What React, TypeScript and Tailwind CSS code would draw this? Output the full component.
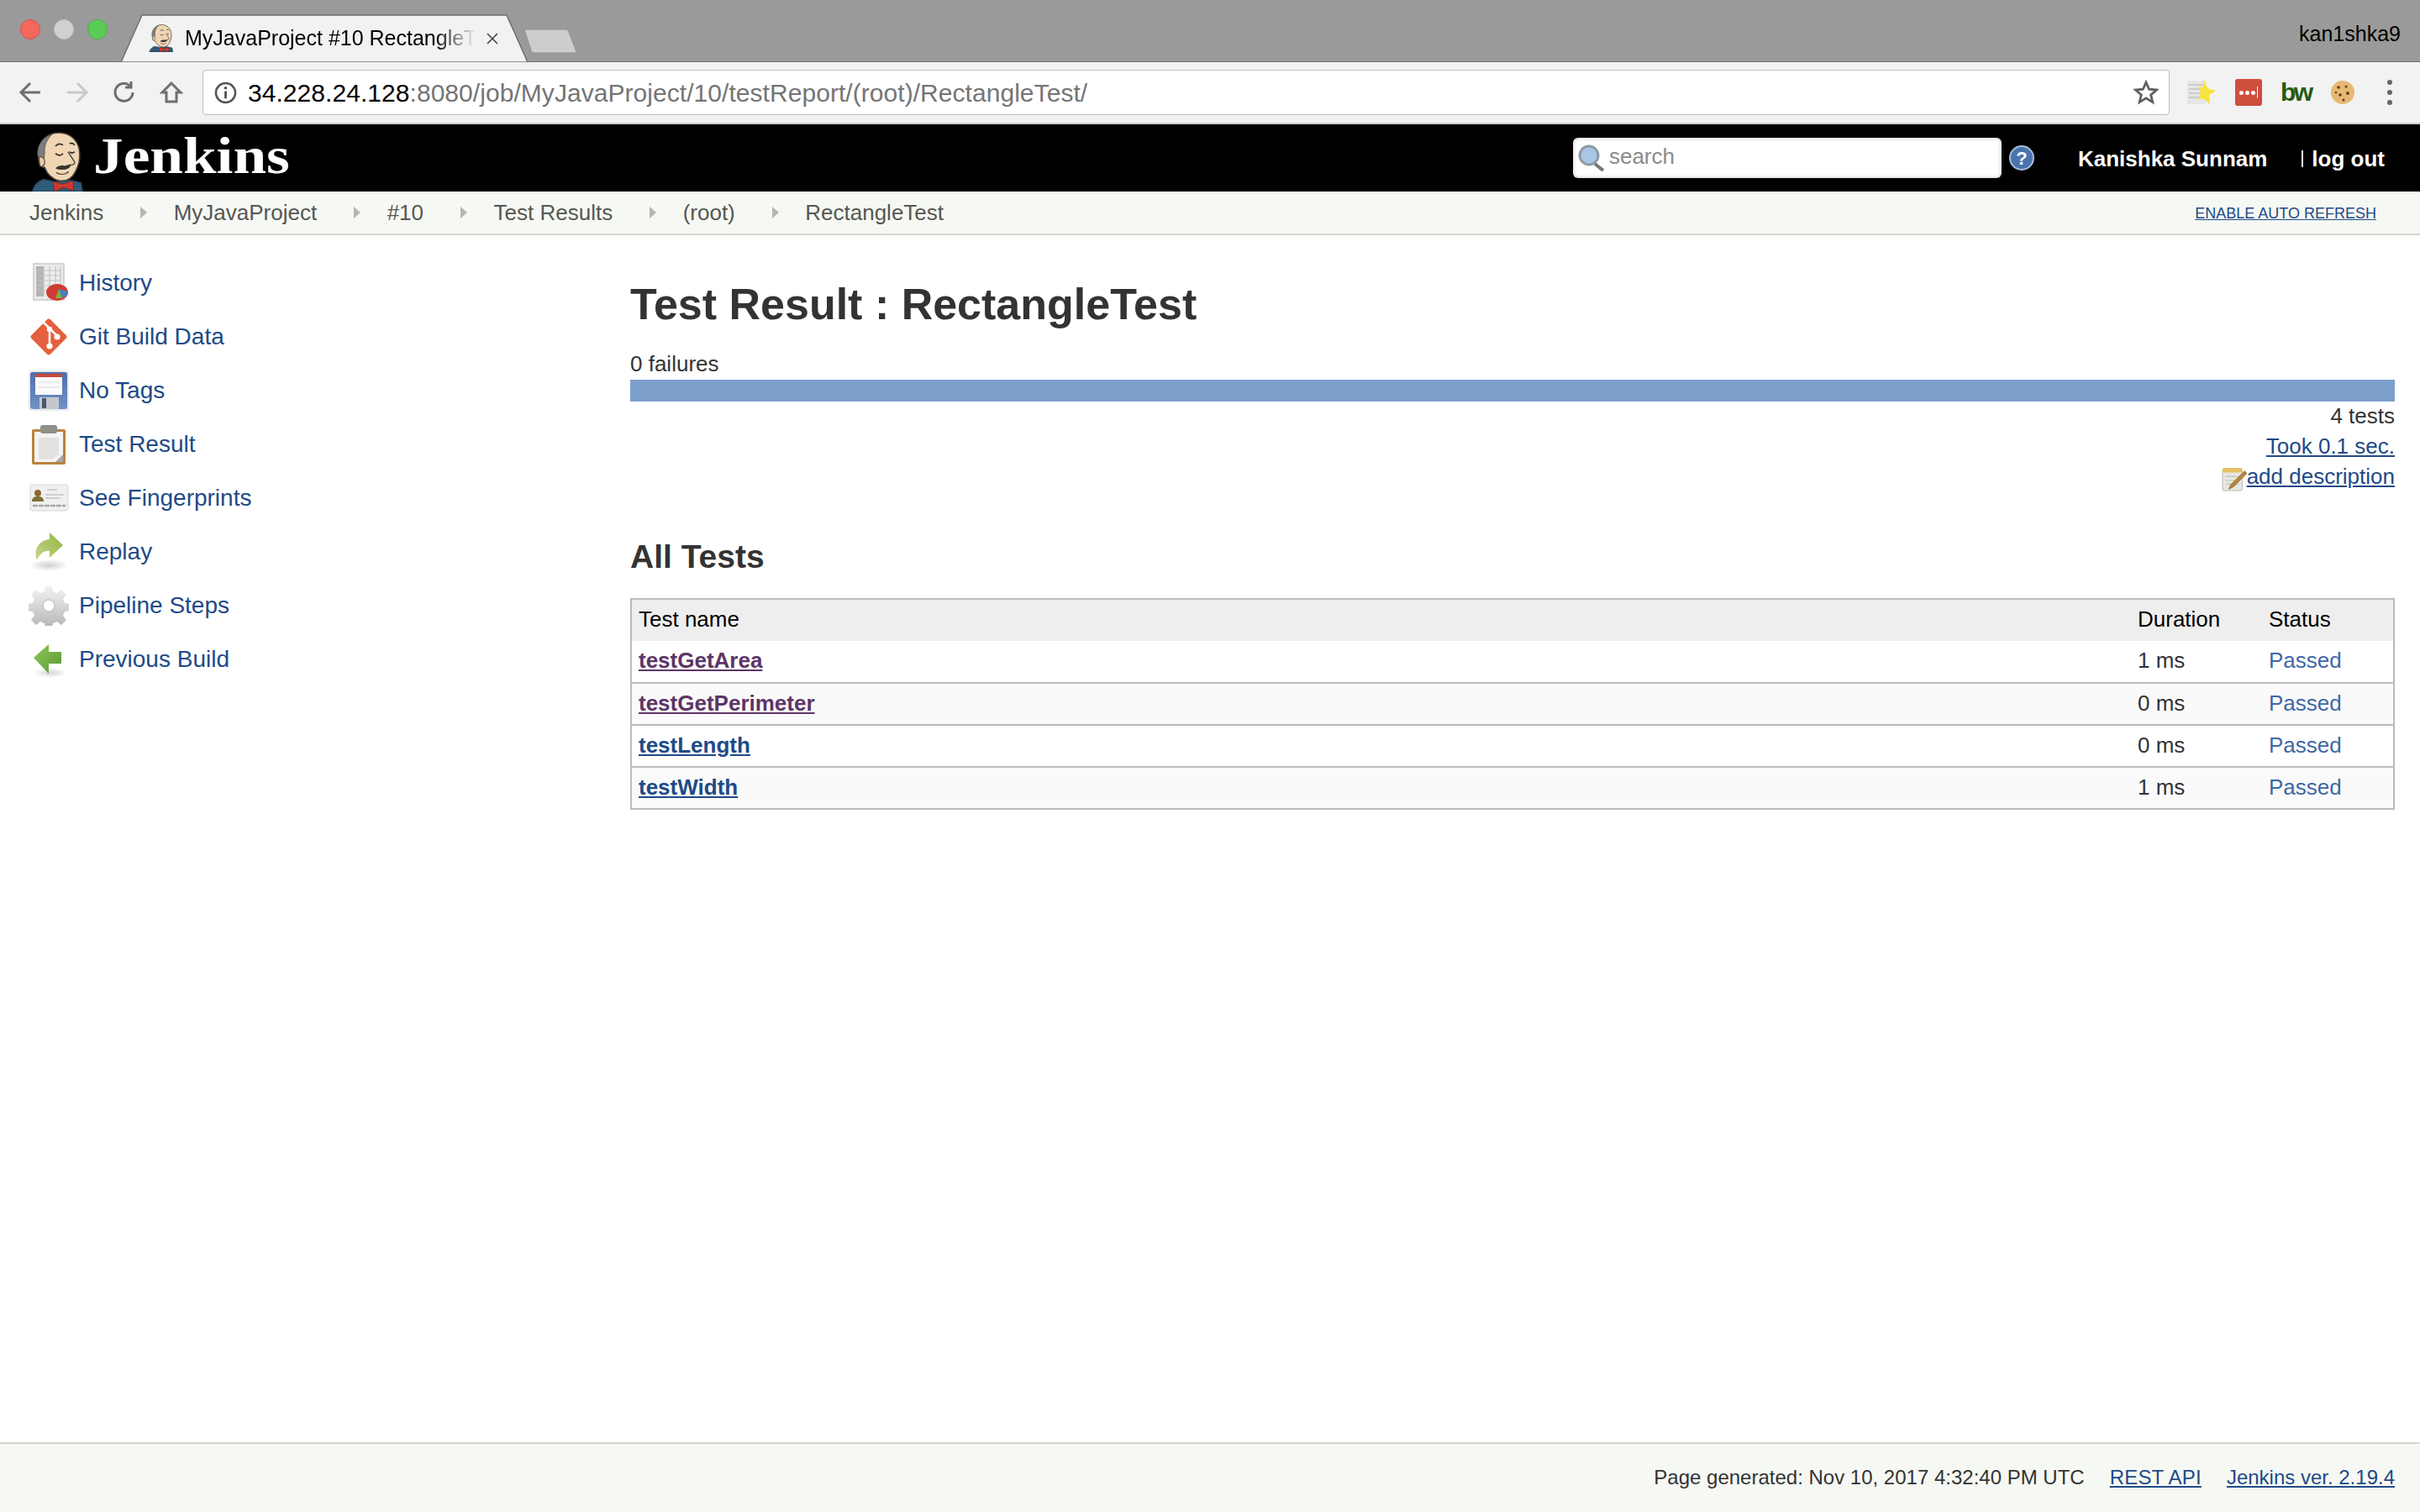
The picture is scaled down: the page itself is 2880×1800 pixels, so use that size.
const sans = "font-['Liberation_Sans',Arial,sans-serif]";

function Butler({ className }: { className?: string }) {
  return (
    <svg viewBox="0 0 64 72" className={className}>
      <path d="M1 72c1-7 6-12 13-15l14 3 18-2 14 3 2 11z" fill="#2f5a78" stroke="#1d3646" strokeWidth="1.2" />
      <path d="M9 30C7 14 18 1 33 1c14 0 24 10 25 23 1 9-1 17-5 24-4 8-11 12-19 11-9-2-15-8-18-16-4 0-7-4-7-8 0-4 0-5 0-5z" fill="#f0d6b4" stroke="#4a433b" strokeWidth="1.6" />
      <path d="M9 34C4 20 12 6 25 3c-7 6-10 15-9 23l-1 7-3 5z" fill="#7e7e7e" stroke="#55514b" strokeWidth="0.8" />
      <path d="M9 31c3-2 7 0 7 5s-3 7-6 5z" fill="#eccba4" stroke="#4a433b" strokeWidth="1.2" />
      <path d="M29 17c3-3 6-3 9-1M46 14c3-1 5 0 6 2" stroke="#2e2a26" strokeWidth="1.8" fill="none" />
      <path d="M29 26c3 3 7 3 9 0M46 24c2 2 4 2 6 0" stroke="#2e2a26" strokeWidth="1.7" fill="none" />
      <path d="M44 24l8 12c1 2-1 4-5 4" stroke="#4a433b" strokeWidth="1.4" fill="none" />
      <path d="M29 44c3-3 7-4 11-3l7-2c1 2-1 5-5 6-4 1-9 1-13-1z" fill="#3a342e" />
      <path d="M30 49c5 3 11 3 15-1" stroke="#4a433b" strokeWidth="1.4" fill="none" />
      <path d="M26 60l12 3 12-4 1 12-12-4-11 5z" fill="#cf3a2e" stroke="#7c1e18" strokeWidth="0.8" />
    </svg>
  );
}

function HistoryIcon() {
  return (
    <svg viewBox="0 0 48 48" className="w-12 h-12">
      <rect x="6" y="1" width="36" height="43" fill="#ececec" stroke="#c9c9c9" strokeWidth="1.5" />
      <rect x="9" y="4" width="9" height="36" fill="#b4b4b4" />
      <path d="M9 9h30M9 15h30M9 21h30M9 27h30M9 33h22M18 4v36M25 4v30M32 4v24M38 4v24" stroke="#c4c4c4" strokeWidth="1.2" />
      <ellipse cx="34" cy="35" rx="13" ry="10" fill="#cf3b34" />
      <path d="M36 31l11 3c0 4-2 6-5 7l-5 1z" fill="#4a7fbf" />
      <path d="M36 31l-4 11h8z" fill="#7cb342" />
    </svg>
  );
}

function GitIcon() {
  return (
    <svg viewBox="0 0 48 48" className="w-12 h-12">
      <rect x="8" y="8" width="32" height="32" rx="3" transform="rotate(45 24 24)" fill="#e4603e" />
      <path d="M18 7l7 7M25 14v21M25 14l10 10" stroke="#fff" strokeWidth="2.6" fill="none" />
      <circle cx="25" cy="15" r="3.2" fill="#fff" />
      <circle cx="25" cy="35" r="3.6" fill="#fff" />
      <circle cx="34" cy="24" r="3.6" fill="#fff" />
    </svg>
  );
}

function FloppyIcon() {
  return (
    <svg viewBox="0 0 48 48" className="w-12 h-12">
      <defs>
        <linearGradient id="floppy" x1="0" y1="0" x2="0" y2="1">
          <stop offset="0" stopColor="#4f6fa8" />
          <stop offset="1" stopColor="#7091c6" />
        </linearGradient>
      </defs>
      <rect x="0" y="0" width="48" height="48" rx="2" fill="#e8eaee" />
      <rect x="2" y="2" width="44" height="44" rx="3" fill="url(#floppy)" />
      <rect x="8" y="4" width="32" height="25" fill="#fafafa" />
      <rect x="8" y="4" width="32" height="4" fill="#c9483c" />
      <path d="M11 14h26M11 20h26" stroke="#dcdcdc" strokeWidth="1.2" />
      <rect x="13" y="32" width="23" height="14" fill="#c4c8ce" />
      <rect x="16" y="33" width="5" height="12" fill="#4c5a70" />
    </svg>
  );
}

function ClipboardIcon() {
  return (
    <svg viewBox="0 0 48 48" className="w-12 h-12">
      <rect x="4" y="6" width="40" height="42" rx="2" fill="#b8843f" />
      <rect x="7" y="9" width="34" height="36" fill="#f4f4f4" />
      <path d="M12 16h24v20l-8 6H12z" fill="#e2e2e2" />
      <path d="M32 45l9-9v9z" fill="#a9a9a9" />
      <rect x="14" y="1" width="20" height="10" rx="3" fill="#8c8f8a" />
    </svg>
  );
}

function CardIcon() {
  return (
    <svg viewBox="0 0 48 48" className="w-12 h-12">
      <rect x="2" y="8" width="45" height="31" rx="3" fill="#f0f0f0" stroke="#d6d6d6" />
      <circle cx="11" cy="18" r="4" fill="#8c6a2f" />
      <path d="M4 28c0-5 3-6 7-6s7 1 7 6z" fill="#7f7134" />
      <path d="M22 14h12M20 20h22M20 24h18" stroke="#c4c4c4" strokeWidth="1.5" />
      <path d="M5 33h39" stroke="#a6a6a6" strokeWidth="2.5" strokeDasharray="6 1" />
    </svg>
  );
}

function ReplayIcon() {
  return (
    <svg viewBox="0 0 48 48" className="w-12 h-12">
      <defs>
        <linearGradient id="replay" x1="0" y1="1" x2="1" y2="0">
          <stop offset="0" stopColor="#c9d88f" />
          <stop offset="1" stopColor="#8fb23d" />
        </linearGradient>
        <radialGradient id="replayShadow">
          <stop offset="0" stopColor="#cfcfcf" />
          <stop offset="1" stopColor="#ffffff" />
        </radialGradient>
      </defs>
      <ellipse cx="24" cy="40" rx="23" ry="7" fill="url(#replayShadow)" />
      <path d="M25 1l16 15-16 15V23C18 22 13 27 10 34 6 23 10 11 25 9z" fill="url(#replay)" />
    </svg>
  );
}

function GearIcon() {
  return (
    <svg viewBox="0 0 48 48" className="w-12 h-12">
      <defs>
        <linearGradient id="gear" x1="0" y1="0" x2="0" y2="1">
          <stop offset="0" stopColor="#f2f2f2" />
          <stop offset="1" stopColor="#b5b5b5" />
        </linearGradient>
      </defs>
      <path d="M20 1h8l1 6 5 2 5-4 6 6-4 5 2 5 6 1v8l-6 1-2 5 4 5-6 6-5-4-5 2-1 6h-8l-1-6-5-2-5 4-6-6 4-5-2-5-6-1v-8l6-1 2-5-4-5 6-6 5 4 5-2z" fill="url(#gear)" />
      <circle cx="24" cy="24" r="7" fill="#fff" stroke="#b4b4b4" strokeWidth="1" />
    </svg>
  );
}

function PrevIcon() {
  return (
    <svg viewBox="0 0 48 48" className="w-12 h-12">
      <defs>
        <linearGradient id="prev" x1="0" y1="0" x2="1" y2="1">
          <stop offset="0" stopColor="#8cc75a" />
          <stop offset="1" stopColor="#5b9a32" />
        </linearGradient>
        <radialGradient id="prevShadow">
          <stop offset="0" stopColor="#d4d4d4" />
          <stop offset="1" stopColor="#ffffff" />
        </radialGradient>
      </defs>
      <ellipse cx="26" cy="40" rx="20" ry="6" fill="url(#prevShadow)" />
      <path d="M6 22L24 6v9h15v14H24v12z" fill="url(#prev)" />
    </svg>
  );
}

const navItems = [
  { label: "History", icon: <HistoryIcon /> },
  { label: "Git Build Data", icon: <GitIcon /> },
  { label: "No Tags", icon: <FloppyIcon /> },
  { label: "Test Result", icon: <ClipboardIcon /> },
  { label: "See Fingerprints", icon: <CardIcon /> },
  { label: "Replay", icon: <ReplayIcon /> },
  { label: "Pipeline Steps", icon: <GearIcon /> },
  { label: "Previous Build", icon: <PrevIcon /> },
];

const crumbs = ["Jenkins", "MyJavaProject", "#10", "Test Results", "(root)", "RectangleTest"];

const tests = [
  { name: "testGetArea", time: "1 ms", visited: true },
  { name: "testGetPerimeter", time: "0 ms", visited: true },
  { name: "testLength", time: "0 ms", visited: false },
  { name: "testWidth", time: "1 ms", visited: false },
];

function ToolbarIcon({ d, color = "#6e6e6e" }: { d: string; color?: string }) {
  return (
    <svg viewBox="0 0 28 28" className="w-7 h-7" fill="none" stroke={color} strokeWidth="3">
      <path d={d} />
    </svg>
  );
}

function TitleBar() {
  return (
    <div className="relative h-[74px] bg-[#9a9a9a] border-b border-[#6f6f6f] flex items-center shrink-0">
      <div className="flex gap-[16px] pl-[24px] pb-[4px]">
        <div className="w-6 h-6 rounded-full bg-[#f4675c] border border-[#d9534a]" />
        <div className="w-6 h-6 rounded-full bg-[#d0d0d0] border border-[#c0c0c0]" />
        <div className="w-6 h-6 rounded-full bg-[#5ccb55] border border-[#4cae45]" />
      </div>
      <div className="absolute left-[144px] top-[17px] w-[484px] h-[57px]">
        <svg viewBox="0 0 484 57" className="absolute inset-0 w-full h-full">
          <path d="M0 57L25 1H459L484 57z" fill="#f2f2f2" stroke="#6f6f6f" strokeWidth="1.5" />
        </svg>
        <div className="relative flex items-center h-full pl-[33px]">
          <Butler className="w-[30px] h-[33px]" />
          <span className={`${sans} ml-[13px] w-[346px] overflow-hidden whitespace-nowrap text-[25px] text-black [mask-image:linear-gradient(to_right,black_86%,transparent)]`}>
            MyJavaProject #10 RectangleT
          </span>
          <svg viewBox="0 0 14 14" className="ml-[13px] w-[14px] h-[14px]" stroke="#444" strokeWidth="1.6">
            <path d="M1 1l12 12M13 1L1 13" />
          </svg>
        </div>
      </div>
      <svg viewBox="0 0 66 32" className="absolute left-[622px] top-[33px] w-[66px] h-[32px]">
        <path d="M2 2H51C53 2 54 3 55 5L64 29C64 30 63 30 62 30H14C12 30 11 29 10 27z" fill="#cdcdcd" stroke="#8f8f8f" strokeWidth="1" />
      </svg>
      <span className={`${sans} absolute right-[23px] top-[26px] text-[25px] leading-[28px] text-black`}>kan1shka9</span>
    </div>
  );
}

function Toolbar() {
  return (
    <div className="h-[74px] bg-[#f2f2f2] border-b-2 border-[#d0d0d0] flex items-center shrink-0 pl-[22px]">
      <div className="flex items-center gap-[28px] w-[219px]">
        <ToolbarIcon d="M26 14H4M14 3L3 14l11 11" />
        <ToolbarIcon d="M2 14h22M14 3l11 11-11 11" color="#c9c9c9" />
        <ToolbarIcon d="M24 14a10.5 10.5 0 1 1-3.5-8M22 1v7h-7" />
        <ToolbarIcon d="M14 3L3 14h5v11h12V14h5z" />
      </div>
      <div className="h-[54px] w-[2341px] bg-white border border-[#bdbdbd] rounded-[4px] flex items-center pl-[13px] pr-[12px]">
        <svg viewBox="0 0 28 28" className="w-[27px] h-[27px] shrink-0" fill="none">
          <circle cx="14" cy="14" r="12" stroke="#555" strokeWidth="2.6" />
          <path d="M14 12v9" stroke="#555" strokeWidth="3" />
          <circle cx="14" cy="8" r="1.9" fill="#555" />
        </svg>
        <span className={`${sans} ml-[13px] text-[30px] tracking-[0.05px] whitespace-nowrap text-[#757575]`}>
          <span className="text-black">34.228.24.128</span>:8080/job/MyJavaProject/10/testReport/(root)/RectangleTest/
        </span>
        <svg viewBox="0 0 30 30" className="ml-auto w-[30px] h-[30px]" fill="none" stroke="#5f5f5f" strokeWidth="2.8">
          <path d="M15 3l3.6 8.2 8.9.8-6.8 5.9 2.1 8.7-7.8-4.7-7.8 4.7 2.1-8.7L2.5 12l8.9-.8z" />
        </svg>
      </div>
      <div className="flex items-center ml-[20px]">
        <svg viewBox="0 0 36 34" className="w-[36px] h-[34px]">
          <rect x="1" y="3" width="22" height="28" fill="#e6e6e6" />
          <path d="M3 8h18M3 13h18M3 18h18M3 23h18" stroke="#c2c2c2" strokeWidth="1.5" />
          <path d="M21 2l4 10 10 3-8 5 1 11-8-7-6 2 3-9-3-7 6 1z" fill="#f7e33d" />
        </svg>
        <div className={`${sans} ml-[22px] w-[32px] h-[32px] bg-[#cf4e3c] rounded-[3px] flex items-center justify-center gap-[2px]`}>
          <span className="w-[5px] h-[5px] rounded-full bg-white" />
          <span className="w-[5px] h-[5px] rounded-full bg-white" />
          <span className="w-[5px] h-[5px] rounded-full bg-white" />
          <span className="w-[1px] h-[14px] bg-white" />
        </div>
        <span className={`${sans} ml-[22px] w-[36px] text-[30px] leading-none font-bold text-[#265c10] tracking-[-2.5px] pb-[1px]`}>bw</span>
        <svg viewBox="0 0 30 30" className="ml-[23px] w-[30px] h-[30px]">
          <circle cx="15" cy="15" r="14" fill="#e6b873" />
          <circle cx="10" cy="9" r="1.8" fill="#5e3a18" />
          <circle cx="19" cy="8" r="1.5" fill="#5e3a18" />
          <circle cx="21" cy="16" r="1.9" fill="#5e3a18" />
          <circle cx="12" cy="18" r="1.8" fill="#5e3a18" />
          <circle cx="16" cy="24" r="1.5" fill="#5e3a18" />
          <circle cx="7" cy="15" r="1.2" fill="#5e3a18" />
        </svg>
        <div className="ml-[38px] flex flex-col gap-[6px]">
          <span className="w-[6px] h-[6px] rounded-full bg-[#666]" />
          <span className="w-[6px] h-[6px] rounded-full bg-[#666]" />
          <span className="w-[6px] h-[6px] rounded-full bg-[#666]" />
        </div>
      </div>
    </div>
  );
}

function JenkinsHeader() {
  return (
    <header className={`${sans} h-[80px] bg-black flex items-end shrink-0`}>
      <div className="flex items-end h-full pl-[37px]">
        <Butler className="w-[64px] h-[71px]" />
        <span className="self-center ml-[10px] origin-left scale-x-[1.15] font-['Liberation_Serif',serif] font-bold text-[62px] leading-none text-white pb-[6px]">
          Jenkins
        </span>
      </div>
      <div className="ml-auto h-full flex items-center">
        <div className="w-[510px] h-[48px] bg-white rounded-[6px] shadow-[inset_0_0_5px_rgba(0,0,0,0.25)] flex items-center pl-[5px]">
          <svg viewBox="0 0 34 32" className="w-[34px] h-[32px]" fill="none">
            <path d="M21 23l10 8" stroke="#777" strokeWidth="4" />
            <circle cx="14" cy="13" r="11" fill="#a9c6e6" stroke="#8d9aa6" strokeWidth="3" />
          </svg>
          <span className="ml-[4px] text-[26px] text-[#8a8a8a] pb-[3px]">search</span>
        </div>
        <svg viewBox="0 0 30 32" className="ml-[9px] w-[30px] h-[32px]">
          <circle cx="15" cy="16" r="14" fill="#4a74ae" stroke="#a9bfdc" strokeWidth="2" />
          <text x="15" y="24" textAnchor="middle" fontSize="22" fontWeight="700" fontFamily="Liberation Sans" fill="#fff">?</text>
        </svg>
        <span className="ml-[52px] text-[26px] font-bold text-white pt-[3px]">Kanishka Sunnam</span>
        <span className="ml-[41px] mr-[10px] w-[2px] h-[20px] bg-white mt-[1px]" />
        <span className="text-[26px] font-bold text-white pr-[42px] pt-[3px]">log out</span>
      </div>
    </header>
  );
}

function Breadcrumbs() {
  return (
    <nav className={`${sans} h-[52px] bg-[#f6f8f3] border-b-2 border-[#d3d7cf] flex items-center pl-[35px] pr-[52px] text-[26px] text-[#555753] shrink-0`}>
      {crumbs.map((c, i) => (
        <div key={c} className="flex items-center">
          <span>{c}</span>
          {i < crumbs.length - 1 && (
            <svg viewBox="0 0 8 14" className="ml-[44px] mr-[31.5px] w-[8px] h-[14px]">
              <path d="M0 0l8 7-8 7z" fill="#b4b7b0" />
            </svg>
          )}
        </div>
      ))}
      <a className="ml-auto text-[18px] text-[#204a87] underline pt-[2px]">ENABLE AUTO REFRESH</a>
    </nav>
  );
}

function Sidebar() {
  return (
    <aside className="w-[750px] shrink-0 pl-[34px] pt-[25px]">
      {navItems.map((item) => (
        <div key={item.label} className="h-[64px] flex items-center">
          {item.icon}
          <a className="ml-[12px] text-[28px] text-[#204a87]">{item.label}</a>
        </div>
      ))}
    </aside>
  );
}

function Main() {
  return (
    <main className="flex-1 pr-[30px] text-[#333]">
      <h1 className="mt-[50px] text-[52px] leading-[64px] font-bold">Test Result : RectangleTest</h1>
      <div className="mt-[23px] text-[26px] leading-[32px]">0 failures</div>
      <div className="h-[26px] bg-[#7d9fcc] mt-[3px]" />
      <div className="flex flex-col items-end text-[26px] leading-[36px] -mt-[1px]">
        <div>4 tests</div>
        <a className="text-[#204a87] underline">Took 0.1 sec.</a>
        <div className="flex items-center">
          <svg viewBox="0 0 32 32" className="w-[30px] h-[30px] mt-[6px]">
            <rect x="1" y="4" width="25" height="27" rx="2" fill="#e8e8e2" stroke="#b9b9b0" />
            <rect x="1" y="2" width="25" height="6" rx="2" fill="#e3c265" />
            <path d="M5 13h17M5 18h17M5 23h17" stroke="#c9c9c0" strokeWidth="1.5" />
            <path d="M29 6l3 3-17 17-6 3 3-6z" fill="#b8883c" stroke="#7d5b22" strokeWidth="0.8" />
          </svg>
          <a className="text-[#204a87] underline">add description</a>
        </div>
      </div>
      <h2 className="mt-[55px] text-[39px] leading-[46px] font-bold">All Tests</h2>
      <table className="mt-[26px] w-full border-collapse border-2 border-[#bbb] text-[26px]">
        <thead>
          <tr className="bg-[#eee] h-[50px] text-black text-left">
            <th className="font-normal pl-[8px] pb-[2px]">Test name</th>
            <th className="font-normal w-[156px] pl-0 pb-[2px]">Duration</th>
            <th className="font-normal w-[149px] pb-[2px]">Status</th>
          </tr>
        </thead>
        <tbody>
          {tests.map((t) => (
            <tr key={t.name} className="h-[50px] border-b-2 border-[#bbb] even:bg-[#fafafa]">
              <td className="pl-[8px] pb-[2px]">
                <a className={`font-bold underline ${t.visited ? "text-[#5c3566]" : "text-[#204a87]"}`}>{t.name}</a>
              </td>
              <td className="pb-[2px]">{t.time}</td>
              <td className="text-[#3e67a5] pb-[2px]">Passed</td>
            </tr>
          ))}
        </tbody>
      </table>
    </main>
  );
}

function Footer() {
  return (
    <footer className="h-[83px] bg-[#f6f8f3] border-t-2 border-[#d3d7cf] flex items-center justify-end gap-[30px] pr-[30px] text-[24px] text-[#333] shrink-0">
      <span className="pb-[2px]">Page generated: Nov 10, 2017 4:32:40 PM UTC</span>
      <a className="text-[#204a87] underline pb-[2px] tracking-[0.2px]">REST API</a>
      <a className="text-[#204a87] underline pb-[2px]">Jenkins ver. 2.19.4</a>
    </footer>
  );
}

export default function App() {
  return (
    <div className={`${sans} w-[2880px] h-[1800px] bg-white flex flex-col overflow-hidden`}>
      <TitleBar />
      <Toolbar />
      <JenkinsHeader />
      <Breadcrumbs />
      <div className="flex-1 flex min-h-0">
        <Sidebar />
        <Main />
      </div>
      <Footer />
    </div>
  );
}
